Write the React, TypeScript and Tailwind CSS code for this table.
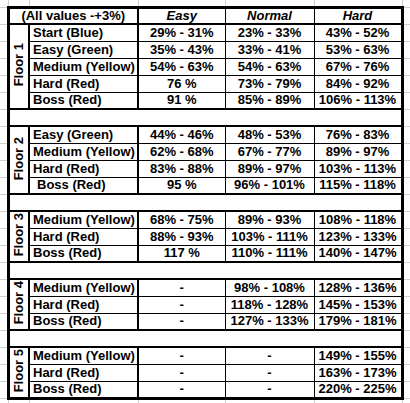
type Row = { name: string; easy: string; normal: string; hard: string; indent?: boolean }

const floors: { label: string; rows: Row[] }[] = [
  {
    label: 'Floor 1',
    rows: [
      { name: 'Start (Blue)', easy: '29% - 31%', normal: '23% - 33%', hard: '43% - 52%' },
      { name: 'Easy (Green)', easy: '35% - 43%', normal: '33% - 41%', hard: '53% - 63%' },
      { name: 'Medium (Yellow)', easy: '54% - 63%', normal: '54% - 63%', hard: '67% - 76%' },
      { name: 'Hard (Red)', easy: '76 %', normal: '73% - 79%', hard: '84% - 92%' },
      { name: 'Boss (Red)', easy: '91 %', normal: '85% - 89%', hard: '106% - 113%' },
    ],
  },
  {
    label: 'Floor 2',
    rows: [
      { name: 'Easy (Green)', easy: '44% - 46%', normal: '48% - 53%', hard: '76% - 83%' },
      { name: 'Medium (Yellow)', easy: '62% - 68%', normal: '67% - 77%', hard: '89% - 97%' },
      { name: 'Hard (Red)', easy: '83% - 88%', normal: '89% - 97%', hard: '103% - 113%' },
      { name: 'Boss (Red)', easy: '95 %', normal: '96% - 101%', hard: '115% - 118%', indent: true },
    ],
  },
  {
    label: 'Floor 3',
    rows: [
      { name: 'Medium (Yellow)', easy: '68% - 75%', normal: '89% - 93%', hard: '108% - 118%' },
      { name: 'Hard (Red)', easy: '88% - 93%', normal: '103% - 111%', hard: '123% - 133%' },
      { name: 'Boss (Red)', easy: '117 %', normal: '110% - 111%', hard: '140% - 147%' },
    ],
  },
  {
    label: 'Floor 4',
    rows: [
      { name: 'Medium (Yellow)', easy: '-', normal: '98% - 108%', hard: '128% - 136%' },
      { name: 'Hard (Red)', easy: '-', normal: '118% - 128%', hard: '145% - 153%' },
      { name: 'Boss (Red)', easy: '-', normal: '127% - 133%', hard: '179% - 181%' },
    ],
  },
  {
    label: 'Floor 5',
    rows: [
      { name: 'Medium (Yellow)', easy: '-', normal: '-', hard: '149% - 155%' },
      { name: 'Hard (Red)', easy: '-', normal: '-', hard: '163% - 173%' },
      { name: 'Boss (Red)', easy: '-', normal: '-', hard: '220% - 225%' },
    ],
  },
]

// spreadsheet gridlines outside the bordered block
const gutter = 'p-0 border-b border-r border-[#d0d0d0]'

export default function App() {
  return (
    <div className="w-[410px] h-[403px] overflow-hidden bg-white text-black font-['Liberation_Sans',Arial,sans-serif] text-[13px] leading-[14px] font-bold">
      <table className="border-collapse table-fixed w-[410px]">
        <colgroup>
          <col className="w-[8px]" />
          <col className="w-[21px]" />
          <col className="w-[109px]" />
          <col className="w-[87px]" />
          <col className="w-[89px]" />
          <col className="w-[88px]" />
          <col className="w-[8px]" />
        </colgroup>
        <tbody>
          {/* top gutter */}
          <tr className="h-[7px]">
            {Array.from({ length: 7 }).map((_, i) => (
              <td key={i} className={gutter} />
            ))}
          </tr>

          {/* header */}
          <tr className="h-[17px]">
            <td className={gutter} />
            <td colSpan={2} className="p-0 text-center whitespace-nowrap border-t-[3px] border-l-[3px] border-b-2 border-r-2 border-black">
              (All values -+3%)
            </td>
            <td className="p-0 text-center italic border-t-[3px] border-b-2 border-r border-black">Easy</td>
            <td className="p-0 text-center italic border-t-[3px] border-b-2 border-r border-black">Normal</td>
            <td className="p-0 text-center italic border-t-[3px] border-b-2 border-r-[3px] border-black">Hard</td>
            <td className={gutter} />
          </tr>

          {floors.map((floor, fi) => {
            const lastFloor = fi === floors.length - 1
            return [
              fi > 0 && (
                <tr key={`gap-${fi}`} className="h-[17px]">
                  <td className={gutter} />
                  <td colSpan={5} className="p-0 border-l-[3px] border-r-[3px] border-black" />
                  <td className={gutter} />
                </tr>
              ),
              ...floor.rows.map((row, ri) => {
                const first = ri === 0
                const last = ri === floor.rows.length - 1
                const edge = `${first ? 'border-t-2' : ''} ${last ? (lastFloor ? 'border-b-[3px]' : 'border-b-2') : 'border-b'}`
                return (
                  <tr key={`${fi}-${ri}`} className="h-[17px]">
                    <td className={gutter} />
                    {first && (
                      <td
                        rowSpan={floor.rows.length}
                        className={`p-0 text-center align-middle border-l-[3px] border-r-2 border-t-2 border-black ${lastFloor ? 'border-b-[3px]' : 'border-b-2'}`}
                      >
                        <span className="inline-block [writing-mode:vertical-rl] rotate-180 whitespace-nowrap leading-[15px]">
                          {floor.label}
                        </span>
                      </td>
                    )}
                    <td className={`p-0 pl-[3px] whitespace-nowrap border-r-2 border-black ${edge}`}>
                      {row.indent ? <span className="pl-[4px]">{row.name}</span> : row.name}
                    </td>
                    <td className={`p-0 text-center whitespace-nowrap border-r border-black ${edge}`}>{row.easy}</td>
                    <td className={`p-0 text-center whitespace-nowrap border-r border-black ${edge}`}>{row.normal}</td>
                    <td className={`p-0 text-center whitespace-nowrap border-r-[3px] border-black ${edge}`}>{row.hard}</td>
                    <td className={gutter} />
                  </tr>
                )
              }),
            ]
          })}

          {/* bottom gutter */}
          <tr className="h-[6px]">
            {Array.from({ length: 7 }).map((_, i) => (
              <td key={i} className={gutter} />
            ))}
          </tr>
        </tbody>
      </table>
    </div>
  )
}
